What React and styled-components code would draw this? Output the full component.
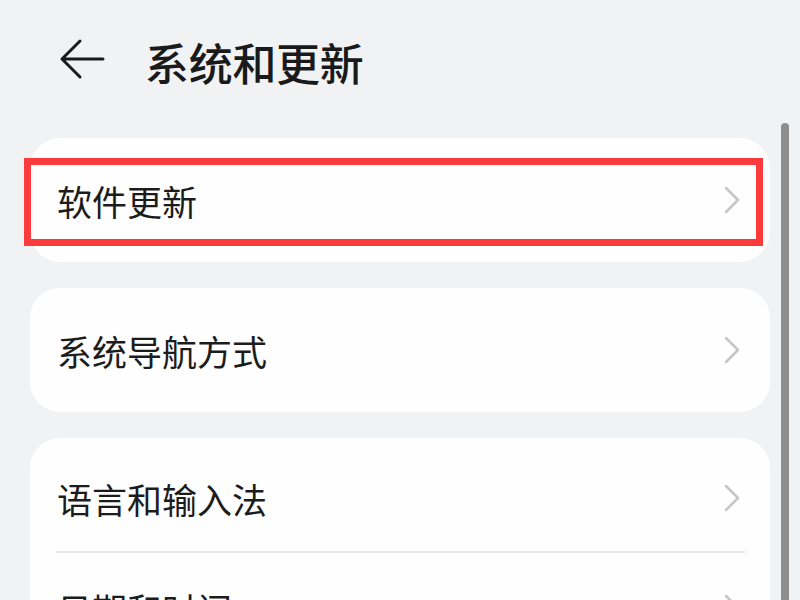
import React from "react";
import styled, { createGlobalStyle } from "styled-components";

const GlobalStyle = createGlobalStyle`
  html, body {
    margin: 0;
    padding: 0;
    background: #f1f2f4;
    overflow: hidden;
  }
  body {
    font-family: "Noto Sans CJK SC", "Noto Sans", sans-serif;
    color: #1a1a1a;
  }
`;

const Screen = styled.div`
  position: relative;
  width: 800px;
  height: 600px;
  overflow: hidden;
  background: #f1f2f4;
`;

const Header = styled.header`
  display: flex;
  align-items: center;
  height: 124px;
  padding-left: 59px;
  box-sizing: border-box;
`;

const BackButton = styled.button`
  display: flex;
  align-items: center;
  justify-content: center;
  width: 46px;
  height: 44px;
  margin-right: 40px;
  margin-top: -4px;
  padding: 0;
  border: none;
  background: transparent;
`;

const Title = styled.h1`
  margin: 0;
  font-size: 44px;
  font-weight: 500;
  letter-spacing: -0.3px;
  color: #1a1a1a;
`;

const List = styled.div`
  display: flex;
  flex-direction: column;
  gap: 26px;
  padding: 14px 30px 0 30px;
`;

const Card = styled.div`
  position: relative;
  background: #fefefe;
  border-radius: 30px;
  padding: 7px 0;
`;

const Row = styled.div`
  display: flex;
  align-items: center;
  justify-content: space-between;
  height: ${(p) => (p.$first ? 106 : 110)}px;
  padding: 0 30px 0 27px;
`;

const Label = styled.span`
  font-size: 35px;
  font-weight: 400;
  color: #1c1c1c;
`;

const Divider = styled.div`
  height: 2px;
  margin: 0 25px 0 26px;
  background: #e6e6e6;
`;

const Highlight = styled.div`
  position: absolute;
  left: -6px;
  right: 7px;
  top: 20px;
  bottom: 16px;
  border: 7px solid #fd3a3c;
  pointer-events: none;
`;

const ScrollBar = styled.div`
  position: absolute;
  right: 11px;
  top: 123px;
  bottom: -20px;
  width: 8px;
  border-radius: 4px;
  background: #8e8e8e;
`;

const BackArrow = () => (
  <svg width="46" height="44" viewBox="0 0 46 44" fill="none">
    <path
      d="M44 21H4M21 3L3 21L21 39"
      stroke="#1a1a1a"
      strokeWidth="3"
      strokeLinecap="round"
      strokeLinejoin="round"
    />
  </svg>
);

const Chevron = () => (
  <svg width="16" height="28" viewBox="0 0 16 28" fill="none">
    <path
      d="M2 2L14 14L2 26"
      stroke="#c6c6c6"
      strokeWidth="2.5"
      strokeLinecap="round"
      strokeLinejoin="round"
    />
  </svg>
);

const groups = [
  { items: ["软件更新"], highlighted: true },
  { items: ["系统导航方式"] },
  { items: ["语言和输入法", "日期和时间"] },
];

export default function App() {
  return (
    <>
      <GlobalStyle />
      <Screen>
        <Header>
          <BackButton aria-label="返回">
            <BackArrow />
          </BackButton>
          <Title>系统和更新</Title>
        </Header>
        <List>
          {groups.map((group, gi) => {
            const multi = group.items.length > 1;
            return (
              <Card key={gi}>
                {group.items.map((item, i) => (
                  <React.Fragment key={item}>
                    {i > 0 && <Divider />}
                    <Row $first={multi && i === 0}>
                      <Label>{item}</Label>
                      <Chevron />
                    </Row>
                  </React.Fragment>
                ))}
                {group.highlighted && <Highlight />}
              </Card>
            );
          })}
        </List>
        <ScrollBar />
      </Screen>
    </>
  );
}
